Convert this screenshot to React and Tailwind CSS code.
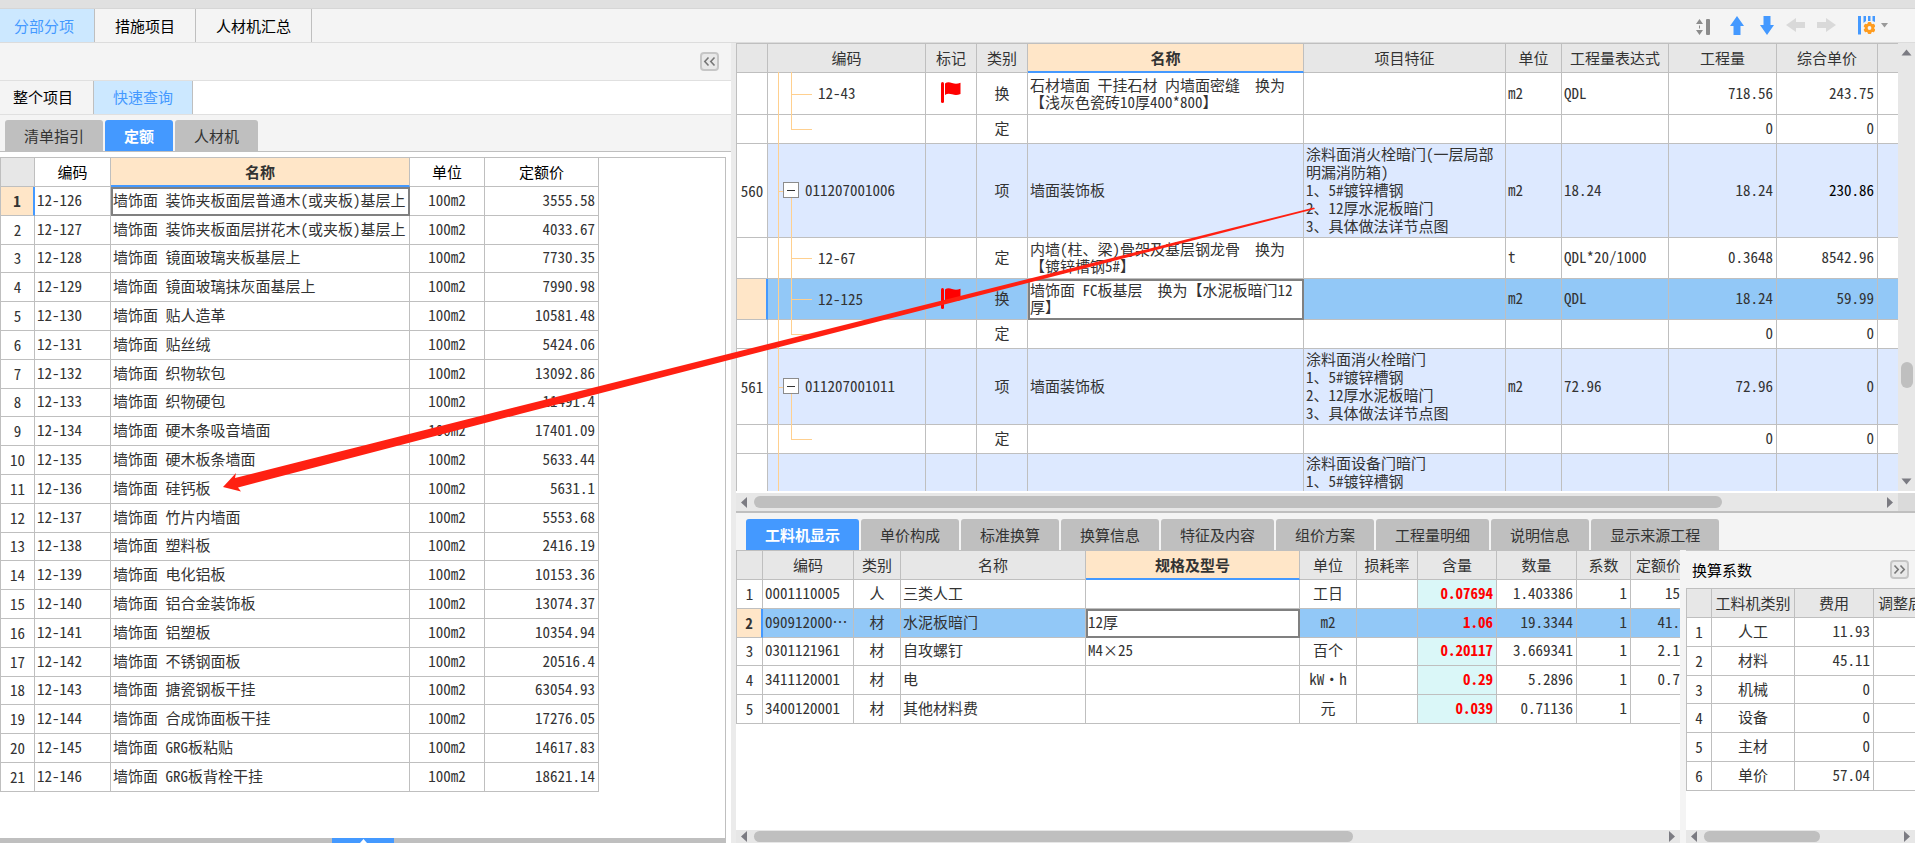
import { useState } from 'react'
import clsx from 'clsx'

const QUOTA_ROWS = [
  ['12-126', '墙饰面 装饰夹板面层普通木(或夹板)基层上', '3555.58'],
  ['12-127', '墙饰面 装饰夹板面层拼花木(或夹板)基层上', '4033.67'],
  ['12-128', '墙饰面 镜面玻璃夹板基层上', '7730.35'],
  ['12-129', '墙饰面 镜面玻璃抹灰面基层上', '7990.98'],
  ['12-130', '墙饰面 贴人造革', '10581.48'],
  ['12-131', '墙饰面 贴丝绒', '5424.06'],
  ['12-132', '墙饰面 织物软包', '13092.86'],
  ['12-133', '墙饰面 织物硬包', '11491.4'],
  ['12-134', '墙饰面 硬木条吸音墙面', '17401.09'],
  ['12-135', '墙饰面 硬木板条墙面', '5633.44'],
  ['12-136', '墙饰面 硅钙板', '5631.1'],
  ['12-137', '墙饰面 竹片内墙面', '5553.68'],
  ['12-138', '墙饰面 塑料板', '2416.19'],
  ['12-139', '墙饰面 电化铝板', '10153.36'],
  ['12-140', '墙饰面 铝合金装饰板', '13074.37'],
  ['12-141', '墙饰面 铝塑板', '10354.94'],
  ['12-142', '墙饰面 不锈钢面板', '20516.4'],
  ['12-143', '墙饰面 搪瓷钢板干挂', '63054.93'],
  ['12-144', '墙饰面 合成饰面板干挂', '17276.05'],
  ['12-145', '墙饰面 GRG板粘贴', '14617.83'],
  ['12-146', '墙饰面 GRG板背栓干挂', '18621.14'],
]

// tree: mid = child with siblings below, end = last child, root = expandable item, rest = continues only
const BILL_ROWS = [
  { h: 'h-[42px]', tree: 'mid', code: '12-43', flag: true, kind: '换', name: '石材墙面 干挂石材 内墙面密缝  换为\n【浅灰色瓷砖10厚400*800】', unit: 'm2', expr: 'QDL', qty: '718.56', price: '243.75' },
  { h: 'h-[29px]', tree: 'end', kind: '定', qty: '0', price: '0' },
  { h: 'h-[94px]', tree: 'root', no: '560', code: '011207001006', kind: '项', name: '墙面装饰板', feature: '涂料面消火栓暗门(一层局部\n明漏消防箱)\n1、5#镀锌槽钢\n2、12厚水泥板暗门\n3、具体做法详节点图', unit: 'm2', expr: '18.24', qty: '18.24', price: '230.86', strong: true },
  { h: 'h-[41px]', tree: 'mid', code: '12-67', kind: '定', name: '内墙(柱、梁)骨架及基层钢龙骨  换为\n【镀锌槽钢5#】', unit: 't', expr: 'QDL*20/1000', qty: '0.3648', price: '8542.96' },
  { h: 'h-[41px]', tree: 'mid', code: '12-125', flag: true, kind: '换', name: '墙饰面 FC板基层  换为【水泥板暗门12\n厚】', unit: 'm2', expr: 'QDL', qty: '18.24', price: '59.99', active: true },
  { h: 'h-[29px]', tree: 'end', kind: '定', qty: '0', price: '0' },
  { h: 'h-[76px]', tree: 'root', no: '561', code: '011207001011', kind: '项', name: '墙面装饰板', feature: '涂料面消火栓暗门\n1、5#镀锌槽钢\n2、12厚水泥板暗门\n3、具体做法详节点图', unit: 'm2', expr: '72.96', qty: '72.96', price: '0' },
  { h: 'h-[29px]', tree: 'end', kind: '定', qty: '0', price: '0' },
  { h: 'h-[76px]', tree: 'rest', feature: '涂料面设备门暗门\n1、5#镀锌槽钢' },
]

const RESOURCE_ROWS = [
  ['0001110005', '人', '三类人工', '', '工日', '0.07694', '1.403386', '1', '15'],
  ['090912000…', '材', '水泥板暗门', '12厚', 'm2', '1.06', '19.3344', '1', '41.'],
  ['0301121961', '材', '自攻螺钉', 'M4×25', '百个', '0.20117', '3.669341', '1', '2.1'],
  ['3411120001', '材', '电', '', 'kW·h', '0.29', '5.2896', '1', '0.7'],
  ['3400120001', '材', '其他材料费', '', '元', '0.039', '0.71136', '1', ''],
]

const COST_ROWS = [
  ['人工', '11.93'],
  ['材料', '45.11'],
  ['机械', '0'],
  ['设备', '0'],
  ['主材', '0'],
  ['单价', '57.04'],
]

const DETAIL_TABS = ['工料机显示', '单价构成', '标准换算', '换算信息', '特征及内容', '组价方案', '工程量明细', '说明信息', '显示来源工程']

function Cell({ children, className }) {
  return <td className={clsx('border-r border-b border-[#bfbfbf] pb-[2px] overflow-hidden', className)}>{children}</td>
}

function Head({ children, className, active, plain }) {
  return (
    <th
      scope="col"
      className={clsx(
        'border-r whitespace-nowrap overflow-hidden',
        active ? 'bg-[#ffe6c8] font-bold border-b-2 border-b-[#4499ff] border-r-[#bfbfbf]' : 'font-normal border-b border-[#bfbfbf]',
        !active && (plain ? 'bg-white text-black' : 'bg-[#e7e7e7]'),
        className
      )}
    >
      {children}
    </th>
  )
}

function Corner({ className }) {
  return <td className={clsx('border-r border-b border-[#bfbfbf] bg-[#e7e7e7]', className)} />
}

function RowNo({ children, active }) {
  return (
    <th
      scope="row"
      className={clsx(
        'border-b border-b-[#bfbfbf] text-center',
        active ? 'bg-[#ffe6c8] font-bold border-r-2 border-r-[#4499ff]' : 'bg-white font-normal border-r border-r-[#bfbfbf]'
      )}
    >
      {children}
    </th>
  )
}

function BoxTabs({ items, value, onChange }) {
  return (
    <div className="flex gap-0.5">
      {items.map(label => (
        <button
          key={label}
          type="button"
          onClick={() => onChange(label)}
          className={clsx(
            'h-[31px] px-[19px] rounded-t-[3px] whitespace-nowrap',
            label === value ? 'bg-[#4499ff] text-white font-bold' : 'bg-[#bfbfbf] text-[#333]'
          )}
        >
          {label}
        </button>
      ))}
    </div>
  )
}

function LineTabs({ items, value, onChange, width }) {
  return (
    <div className="flex">
      {items.map(label => (
        <button
          key={label}
          type="button"
          onClick={() => onChange(label)}
          className={clsx(
            'border-r border-[#bfbfbf] whitespace-nowrap',
            width,
            label === value ? 'bg-[#cce8ff] text-[#4499ff]' : 'bg-[#f4f4f4] text-black'
          )}
        >
          {label}
        </button>
      ))}
    </div>
  )
}

function FoldButton({ label, flip }) {
  return (
    <button type="button" aria-label={label} className="size-[19px] rounded-[4px] border-2 border-[#c6c6c6] bg-[#e9e9e9] flex items-center justify-center">
      <svg width="13" height="11" viewBox="0 0 13 11" className={clsx('shrink-0', flip && 'rotate-180')} fill="none" stroke="#777" strokeWidth="1.6">
        <path d="M5.5 1.5 1.8 5.5l3.7 4M11.5 1.5 7.8 5.5l3.7 4" />
      </svg>
    </button>
  )
}

function Flag() {
  return (
    <svg width="20" height="21" viewBox="0 0 20 21" className="mx-auto" fill="#ff0000">
      <rect x="0" y="0" width="3" height="21" rx="1.5" />
      <path d="M4 1.5c2-1.6 4-1.6 7-.6s5 1 8.500-.1V12c-3 1.300-5.500 1.300-8.500.3S6 11.600 4 13z" />
    </svg>
  )
}

function Triangle({ dir }) {
  const d = {
    left: 'M8 0v11L2 5.500z',
    right: 'M3 0v11l6-5.500z',
    up: 'M0.500 8.500h10L5.500 2.500z',
    down: 'M0.500 2.500h10L5.500 8.500z',
  }[dir]
  return <svg width="11" height="11" viewBox="0 0 11 11" fill="#7b7b82" className="shrink-0"><path d={d} /></svg>
}

function HScroll({ children, className }) {
  return (
    <div className={clsx('flex items-center bg-[#e7e7e7] pl-[3px] pr-[3px] gap-1', className)}>
      <Triangle dir="left" />
      <div className="flex-1 flex">{children}</div>
      <Triangle dir="right" />
    </div>
  )
}

// Connector lines of the bill tree
function Branch({ kind }) {
  const line = 'absolute bg-[#ffd08f]'
  return (
    <>
      <span className={clsx(line, 'left-[10px] -top-px -bottom-px w-px')} />
      {kind === 'mid' && <span className={clsx(line, 'left-[23px] -top-px -bottom-px w-px')} />}
      {kind === 'end' && <span className={clsx(line, 'left-[23px] -top-px bottom-1/2 w-px')} />}
      {(kind === 'mid' || kind === 'end') && <span className={clsx(line, 'left-[23px] top-1/2 w-[21px] h-px')} />}
      {kind === 'root' && (
        <>
          <span className={clsx(line, 'left-[10px] top-1/2 w-[5px] h-px')} />
          <span className={clsx(line, 'left-[23px] top-1/2 -bottom-px w-px')} />
        </>
      )}
    </>
  )
}

function ToolBar() {
  const btn = 'flex items-center justify-center'
  return (
    <div className="flex items-center pr-[27px] pb-px">
      <button type="button" aria-label="行高" className={clsx(btn, 'w-[14px] mr-5 mt-1')}>
        <svg width="14" height="17" viewBox="0 0 14 17" fill="#8c8c8c">
          <path d="M3.500 0 7 5H0zM3.500 16 7 11H0zM3 6.500h1v3H3z" />
          <rect x="10" y="0" width="4" height="16" rx="1" />
        </svg>
      </button>
      <button type="button" aria-label="上移" className={clsx(btn, 'w-[14px] mr-4')}>
        <svg width="14" height="19" viewBox="0 0 14 19" fill="#4499ff"><path d="M7 0l7 10h-3.500v9h-7v-9H0z" /></svg>
      </button>
      <button type="button" aria-label="下移" className={clsx(btn, 'w-[14px] mr-3')}>
        <svg width="14" height="19" viewBox="0 0 14 19" fill="#4499ff"><path d="M7 19l7-10h-3.500V0h-7v9H0z" /></svg>
      </button>
      <button type="button" aria-label="左移" className={clsx(btn, 'w-[19px] mr-3')}>
        <svg width="19" height="14" viewBox="0 0 19 14" fill="#d9d9d9"><path d="M0 7l10-7v4h9v6h-9v4z" /></svg>
      </button>
      <button type="button" aria-label="右移" className={clsx(btn, 'w-[19px] mr-[22px]')}>
        <svg width="19" height="14" viewBox="0 0 19 14" fill="#d9d9d9"><path d="M19 7L9 0v4H0v6h9v4z" /></svg>
      </button>
      <button type="button" aria-label="列设置" className={clsx(btn, 'gap-[6px]')}>
        <svg width="17" height="19" viewBox="0 0 17 19">
          <path d="M0 0h3v18.500H0zM5.500 0H8v5l-2.500 2zM10 0h2.500v5H10zM14.500 0H17v6l-2.500-1z" fill="#4499ff" />
          <g fill="#ff9c1f">
            <circle cx="11.500" cy="12" r="4.800" />
            <g>
              <rect x="9.700" y="6" width="3.600" height="12" rx="1" />
              <rect x="9.700" y="6" width="3.600" height="12" rx="1" transform="rotate(60 11.500 12)" />
              <rect x="9.700" y="6" width="3.600" height="12" rx="1" transform="rotate(120 11.500 12)" />
            </g>
          </g>
          <circle cx="11.500" cy="12" r="1.900" fill="#f4f4f4" />
        </svg>
        <svg width="7" height="5" viewBox="0 0 7 5" fill="#999"><path d="M0 0h7L3.500 4.500z" /></svg>
      </button>
    </div>
  )
}

function QuotaPanel() {
  const [view, setView] = useState('快速查询')
  const [tab, setTab] = useState('定额')
  return (
    <section className="w-[731px] shrink-0 flex flex-col min-h-0">
      <div className="h-[37px] flex items-center justify-end pr-3">
        <FoldButton label="收起" />
      </div>
      <div className="h-[35px] flex bg-white border-y border-[#e0e0e0]">
        <LineTabs
          items={['整个项目', '快速查询']}
          value={view}
          onChange={setView}
          width="pb-px first:pl-[13px] first:pr-5 last:px-[19px]"
        />
      </div>
      <div className="h-[37px] flex items-end pl-[5px] border-b border-[#bfbfbf]">
        <BoxTabs items={['清单指引', '定额', '人材机']} value={tab} onChange={setTab} />
      </div>
      <div className="flex-1 min-h-0 flex flex-col bg-white pt-[5px]">
        <div className="flex-1 min-h-0 overflow-hidden mr-[5px] border-t border-r border-[#bfbfbf]">
          <table className="table-fixed w-[599px] h-[634px] border-separate border-spacing-0 border-l border-[#bfbfbf]">
            <colgroup>
              <col className="w-[34px]" />
              <col className="w-[76px]" />
              <col />
              <col className="w-[75px]" />
              <col className="w-[114px]" />
            </colgroup>
            <thead>
              <tr className="h-[29px]">
                <Corner />
                <Head plain>编码</Head>
                <Head active>名称</Head>
                <Head plain>单位</Head>
                <Head plain>定额价</Head>
              </tr>
            </thead>
            <tbody>
              {QUOTA_ROWS.map(([code, name, price], i) => (
                <tr key={code}>
                  <RowNo active={i === 0}>{i + 1}</RowNo>
                  <Cell className="pl-[2px]">{code}</Cell>
                  <Cell className={clsx('whitespace-nowrap pl-[2px]', i === 0 && 'outline-2 -outline-offset-2 outline-[#808080]')}>{name}</Cell>
                  <Cell className="text-center">100m2</Cell>
                  <Cell className="text-right pr-[3px]">{price}</Cell>
                </tr>
              ))}
            </tbody>
          </table>
        </div>
        <div className="h-[5px] bg-[#bfbfbf] flex mr-[5px]">
          <button type="button" aria-label="展开" className="w-[62px] ml-[332px] bg-[#4499ff] flex justify-center">
            <svg width="7" height="5" viewBox="0 0 7 5" fill="#fff"><path d="M3.500 1 7 5H0z" /></svg>
          </button>
        </div>
      </div>
    </section>
  )
}

function BillTable() {
  return (
    <div className="h-[470px] shrink-0 flex flex-col border-b-2 border-[#bfbfbf]">
      <div className="flex-1 min-h-0 flex">
        <div className="flex-1 min-w-0 overflow-hidden bg-white">
          <table className="table-fixed w-full border-separate border-spacing-0 border-l border-[#bfbfbf]">
            <colgroup>
              <col className="w-[31px]" />
              <col className="w-[158px]" />
              <col className="w-[51px]" />
              <col className="w-[51px]" />
              <col />
              <col className="w-[202px]" />
              <col className="w-[56px]" />
              <col className="w-[107px]" />
              <col className="w-[108px]" />
              <col className="w-[101px]" />
              <col className="w-[20px]" />
            </colgroup>
            <thead>
              <tr className="h-[30px]">
                <Corner className="border-t" />
                <Head className="border-t">编码</Head>
                <Head className="border-t">标记</Head>
                <Head className="border-t">类别</Head>
                <Head active className="border-t border-t-[#bfbfbf]">名称</Head>
                <Head className="border-t">项目特征</Head>
                <Head className="border-t">单位</Head>
                <Head className="border-t">工程量表达式</Head>
                <Head className="border-t">工程量</Head>
                <Head className="border-t">综合单价</Head>
                <Corner className="border-t border-r-0" />
              </tr>
            </thead>
            <tbody>
              {BILL_ROWS.map((r, i) => (
                <tr
                  key={i}
                  className={clsx(
                    r.h,
                    r.active && 'bg-[#92c8f7]',
                    (r.tree === 'root' || r.tree === 'rest') && 'bg-[#dde9ff]'
                  )}
                >
                  <RowNo active={r.active}>{r.no}</RowNo>
                  <td className={clsx('relative border-r border-b border-[#bfbfbf] pb-px', r.tree === 'root' ? 'pl-[15px]' : 'pl-[50px]')}>
                    <Branch kind={r.tree} />
                    <div className="relative flex items-center gap-[6px]">
                      {r.tree === 'root' && (
                        <button type="button" aria-label="折叠" className="size-4 border border-[#8c8c8c] bg-white flex items-center justify-center">
                          <span className="w-2 h-px bg-[#333]" />
                        </button>
                      )}
                      {r.code}
                    </div>
                  </td>
                  <Cell>{r.flag && <Flag />}</Cell>
                  <Cell className="text-center">{r.kind}</Cell>
                  <Cell className={clsx('pl-[2px] whitespace-pre leading-[17px]', r.active && 'bg-white outline-2 -outline-offset-2 outline-[#808080]')}>
                    {r.name}
                  </Cell>
                  <Cell className={clsx('pl-[2px] whitespace-pre leading-[18px]', r.tree === 'rest' && 'align-top')}>{r.feature}</Cell>
                  <Cell className="pl-[2px]">{r.unit}</Cell>
                  <Cell className="pl-[2px]">{r.expr}</Cell>
                  <Cell className="text-right pr-[3px]">{r.qty}</Cell>
                  <Cell className={clsx('text-right pr-[3px]', r.strong && 'text-black')}>{r.price}</Cell>
                  <Cell className="border-r-0" />
                </tr>
              ))}
            </tbody>
          </table>
        </div>
        <div className="w-[17px] bg-[#e7e7e7] flex flex-col items-center py-1">
          <Triangle dir="up" />
          <div className="grow-[307]" />
          <div className="w-3 h-[26px] rounded-full bg-[#bfbfbf]" />
          <div className="grow-[89]" />
          <Triangle dir="down" />
        </div>
      </div>
      <div className="h-[20px] shrink-0 flex border-t-2 border-white">
        <HScroll className="flex-1">
          <div className="w-[86%] h-3 rounded-full bg-[#bfbfbf]" />
        </HScroll>
        <div className="w-[17px] bg-[#dadada]" />
      </div>
    </div>
  )
}

function ResourceTable() {
  return (
    <div className="flex-1 min-w-0 flex flex-col bg-white">
      <div className="flex-1 min-h-0 overflow-hidden">
        <table className="table-fixed w-full h-[174px] border-separate border-spacing-0 border-l border-[#bfbfbf]">
          <colgroup>
            <col className="w-[26px]" />
            <col className="w-[91px]" />
            <col className="w-[47px]" />
            <col className="w-[185px]" />
            <col />
            <col className="w-[57px]" />
            <col className="w-[61px]" />
            <col className="w-[79px]" />
            <col className="w-[80px]" />
            <col className="w-[54px]" />
            <col className="w-[49px]" />
          </colgroup>
          <thead>
            <tr className="h-[30px]">
              <Corner className="border-t" />
              <Head className="border-t">编码</Head>
              <Head className="border-t">类别</Head>
              <Head className="border-t">名称</Head>
              <Head active className="border-t border-t-[#bfbfbf]">规格及型号</Head>
              <Head className="border-t">单位</Head>
              <Head className="border-t">损耗率</Head>
              <Head className="border-t">含量</Head>
              <Head className="border-t">数量</Head>
              <Head className="border-t">系数</Head>
              <Head className="border-t border-r-0 text-left pl-[5px]">定额价</Head>
            </tr>
          </thead>
          <tbody>
            {RESOURCE_ROWS.map(([code, kind, name, spec, unit, content, qty, factor, price], i) => (
              <tr key={code} className={clsx(i === 1 && 'bg-[#92c8f7]')}>
                <RowNo active={i === 1}>{i + 1}</RowNo>
                <Cell className="pl-[2px] whitespace-nowrap">{code}</Cell>
                <Cell className="text-center">{kind}</Cell>
                <Cell className="pl-[2px]">{name}</Cell>
                <Cell className={clsx('pl-[2px]', i === 1 && 'bg-white outline-2 -outline-offset-2 outline-[#808080]')}>{spec}</Cell>
                <Cell className="text-center">{unit}</Cell>
                <Cell />
                <Cell className={clsx('text-right pr-[3px] text-[#ff0000] font-bold', i !== 1 && 'bg-[#daf7f8]')}>{content}</Cell>
                <Cell className="text-right pr-[3px]">{qty}</Cell>
                <Cell className="text-right pr-[3px]">{factor}</Cell>
                <Cell className="text-right border-r-0">{price}</Cell>
              </tr>
            ))}
          </tbody>
        </table>
      </div>
      <HScroll className="h-[13px] shrink-0">
        <div className="w-[66%] h-[11px] rounded-full bg-[#bfbfbf]" />
      </HScroll>
    </div>
  )
}

function CostPanel() {
  return (
    <aside className="w-[229px] shrink-0 flex flex-col bg-[#f4f4f4] border-t border-[#c8c8c8]">
      <div className="h-[37px] shrink-0 flex items-center justify-between pl-[6px] pr-[6px]">
        <h2 className="text-black">换算系数</h2>
        <FoldButton label="展开" flip />
      </div>
      <div className="flex-1 min-h-0 overflow-hidden bg-white">
        <table className="table-fixed w-full h-[203px] border-separate border-spacing-0 border-l border-[#bfbfbf]">
          <colgroup>
            <col className="w-[25px]" />
            <col className="w-[83px]" />
            <col className="w-[79px]" />
            <col />
          </colgroup>
          <thead>
            <tr className="h-[30px]">
              <Corner className="border-t" />
              <Head className="border-t">工料机类别</Head>
              <Head className="border-t">费用</Head>
              <Head className="border-t border-r-0 text-left pl-1">调整后</Head>
            </tr>
          </thead>
          <tbody>
            {COST_ROWS.map(([name, cost], i) => (
              <tr key={name}>
                <RowNo>{i + 1}</RowNo>
                <Cell className="text-center">{name}</Cell>
                <Cell className="text-right pr-[3px]">{cost}</Cell>
                <Cell className="border-r-0" />
              </tr>
            ))}
          </tbody>
        </table>
      </div>
      <HScroll className="h-[13px] shrink-0">
        <div className="w-[60%] h-[11px] rounded-full bg-[#bfbfbf]" />
      </HScroll>
    </aside>
  )
}

export default function App() {
  const [page, setPage] = useState('分部分项')
  const [detail, setDetail] = useState('工料机显示')
  return (
    <div className="relative h-screen flex flex-col overflow-hidden bg-[#f4f4f4] text-[#333] text-[15px] leading-[20px] font-['Noto_Sans_Mono_CJK_SC','Noto_Sans_CJK_SC',sans-serif]">
      <div className="h-[9px] shrink-0 bg-[#e0e0e0] border-b border-[#d6d6d6]" />
      <header className="h-[34px] shrink-0 flex justify-between border-b border-[#dcdcdc]">
        <LineTabs items={['分部分项', '措施项目', '人材机汇总']} value={page} onChange={setPage} width="px-5 first:pl-[14px]" />
        <ToolBar />
      </header>
      <main className="flex-1 min-h-0 flex">
        <QuotaPanel />
        <div className="w-[5px] shrink-0 bg-[#ebebeb]" />
        <section className="flex-1 min-w-0 flex flex-col">
          <BillTable />
          <div className="pt-[6px] pl-[10px] shrink-0">
            <BoxTabs items={DETAIL_TABS} value={detail} onChange={setDetail} />
          </div>
          <div className="flex-1 min-h-0 flex gap-[6px]">
            <ResourceTable />
            <CostPanel />
          </div>
        </section>
      </main>
      <svg width="1100" height="300" viewBox="220 200 1100 300" className="absolute left-[220px] top-[200px] pointer-events-none" fill="#ff2012">
        <path d="M223 487 236 473 235 478 520 406 1314 207.500 1315 209 520 414 238 487.500 241 491.500Z" />
      </svg>
    </div>
  )
}
